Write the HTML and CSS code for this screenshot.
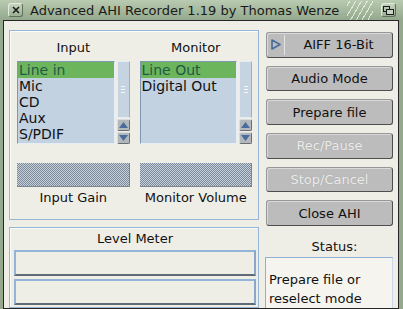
FILE: index.html
```html
<!DOCTYPE html>
<html lang="en">
<head>
    <meta charset="UTF-8">
    <title>Advanced AHI Recorder</title>
    <link rel="stylesheet" href="styles.css">
</head>
<body>
    <div class="window">
        <!-- Title bar -->
        <div class="titlebar">
            <span class="gadget close">
                <svg width="8" height="8" viewBox="0 0 8 8"><path d="M1 1L7 7M7 1L1 7" stroke="#1c1c1c" stroke-width="1.6"/></svg>
            </span>
            <span class="title">Advanced AHI Recorder 1.19 by Thomas Wenze</span>
            <span class="stripes"></span>
            <span class="gadget depth">
                <svg width="11" height="9" viewBox="0 0 11 9"><rect x="0.5" y="0.5" width="6" height="5" fill="none" stroke="#1c1c1c"/><rect x="3.5" y="3.5" width="7" height="5" fill="#c9d5c3" stroke="#1c1c1c"/></svg>
            </span>
        </div>

        <div class="content">
            <div class="left">
                <!-- Mixer group -->
                <div class="group mixer">
                    <div class="channel">
                        <div class="label">Input</div>
                        <div class="listview">
                            <ul class="list">
                                <li class="sel">Line in</li>
                                <li>Mic</li>
                                <li>CD</li>
                                <li>Aux</li>
                                <li>S/PDIF</li>
                            </ul>
                            <div class="scroller">
                                <div class="track"><span class="knob"></span></div>
                                <div class="arrow up"><svg width="9" height="6" viewBox="0 0 9 6"><path d="M4.5 0L9 6H0Z" fill="#4a6c9c"/></svg></div>
                                <div class="arrow down"><svg width="9" height="6" viewBox="0 0 9 6"><path d="M0 0H9L4.5 6Z" fill="#4a6c9c"/></svg></div>
                            </div>
                        </div>
                        <div class="slider">
                            <svg width="100%" height="100%"><defs><pattern id="dots1" width="2" height="2" patternUnits="userSpaceOnUse"><rect width="1" height="1" fill="#7b8a9b"/><rect x="1" y="1" width="1" height="1" fill="#7b8a9b"/></pattern></defs><rect width="100%" height="100%" fill="url(#dots1)" shape-rendering="crispEdges"/></svg>
                        </div>
                        <div class="label">Input Gain</div>
                    </div>
                    <div class="channel">
                        <div class="label">Monitor</div>
                        <div class="listview">
                            <ul class="list">
                                <li class="sel">Line Out</li>
                                <li>Digital Out</li>
                            </ul>
                            <div class="scroller">
                                <div class="track"><span class="knob"></span></div>
                                <div class="arrow up"><svg width="9" height="6" viewBox="0 0 9 6"><path d="M4.5 0L9 6H0Z" fill="#4a6c9c"/></svg></div>
                                <div class="arrow down"><svg width="9" height="6" viewBox="0 0 9 6"><path d="M0 0H9L4.5 6Z" fill="#4a6c9c"/></svg></div>
                            </div>
                        </div>
                        <div class="slider">
                            <svg width="100%" height="100%"><defs><pattern id="dots2" width="2" height="2" patternUnits="userSpaceOnUse"><rect width="1" height="1" fill="#7b8a9b"/><rect x="1" y="1" width="1" height="1" fill="#7b8a9b"/></pattern></defs><rect width="100%" height="100%" fill="url(#dots2)" shape-rendering="crispEdges"/></svg>
                        </div>
                        <div class="label">Monitor Volume</div>
                    </div>
                </div>

                <!-- Level meter group -->
                <div class="group meter">
                    <div class="label">Level Meter</div>
                    <div class="gauge"></div>
                    <div class="gauge"></div>
                </div>
            </div>

            <div class="right">
                <div class="button cycle">
                    <span class="cycle-icon">
                        <svg width="10" height="11" viewBox="0 0 10 11"><path d="M1 1L9 5.5L1 10Z" fill="none" stroke="#4a6c9c" stroke-width="1.6" stroke-linejoin="round"/></svg>
                    </span>
                    <span class="cycle-text">AIFF 16-Bit</span>
                </div>
                <div class="button">Audio Mode</div>
                <div class="button">Prepare file</div>
                <div class="button disabled">Rec/Pause</div>
                <div class="button disabled">Stop/Cancel</div>
                <div class="button">Close AHI</div>
                <div class="status-label">Status:</div>
                <div class="status">Prepare file or<br>reselect mode</div>
            </div>
        </div>
    </div>
</body>
</html>
```

FILE: styles.css
```css
body, html {
    margin: 0;
    padding: 0;
    font-family: "DejaVu Sans", "Liberation Sans", sans-serif;
    color: #111;
    background-color: #93a88c;
}

.window {
    width: 403px;
    height: 309px;
    overflow: hidden;
    display: flex;
    flex-direction: column;
    background: #93a88c;
}

/* Title bar */
.titlebar {
    height: 20px;
    display: flex;
    align-items: center;
    background: linear-gradient(#b9cbb1, #93a88c);
    flex-shrink: 0;
}

.gadget {
    flex-shrink: 0;
    width: 13px;
    height: 12px;
    border: 1px solid #e3ebdf;
    border-right-color: #5f705a;
    border-bottom-color: #5f705a;
    border-radius: 3px;
    background: linear-gradient(#c4d3bd, #9db195);
    display: flex;
    align-items: center;
    justify-content: center;
}

.close {
    margin-left: 8px;
}

.title {
    margin-left: 7px;
    font-size: 13px;
    color: #1a1a1a;
    white-space: nowrap;
    overflow: hidden;
}

.stripes {
    flex-shrink: 0;
    width: 26px;
    height: 19px;
    margin-left: 8px;
    background: repeating-linear-gradient(-60deg, transparent 0 4px, rgba(240, 246, 236, 0.8) 4px 5px);
}

.depth {
    margin-left: auto;
    margin-right: 7px;
}

/* Window content */
.content {
    flex: 1;
    margin: 0 4px 0 3px;
    border: 1px solid #262626;
    background: #efeee6;
    display: flex;
    gap: 7px;
    padding: 9px 5px 0 5px;
    overflow: hidden;
}

.left {
    width: 250px;
    display: flex;
    flex-direction: column;
    gap: 7px;
}

.right {
    width: 127px;
    padding-top: 2px;
    display: flex;
    flex-direction: column;
}

.group {
    box-sizing: border-box;
    border: 1px solid #97b5d6;
    box-shadow: inset 1px 1px 0 #fbfbf7;
}

.label {
    font-size: 13px;
    line-height: 16px;
    text-align: center;
}

/* Mixer */
.mixer {
    height: 190px;
    display: flex;
    gap: 10px;
    padding: 9px 6px 0 7px;
}

.channel {
    flex: 1;
    display: flex;
    flex-direction: column;
}

.listview {
    margin-top: 5px;
    height: 83px;
    display: flex;
    gap: 2px;
}

.list {
    flex: 1;
    margin: 0;
    padding: 0;
    list-style: none;
    background: #c3d2e1;
    border: 1px solid #7f97b1;
    border-right-color: #e6edf4;
    border-bottom-color: #e6edf4;
    font-size: 14px;
    line-height: 16px;
}

.list li {
    padding-left: 1px;
}

.list li.sel {
    background: #6cb55d;
    color: #1f5a45;
}

.scroller {
    width: 13px;
    display: flex;
    flex-direction: column;
    gap: 1px;
}

.track {
    flex: 1;
    background: #c6d4e2;
    border: 1px solid #e4ecf4;
    border-right-color: #9eb0c4;
    display: flex;
    align-items: center;
    justify-content: center;
}

.knob {
    width: 4px;
    height: 10px;
    background: radial-gradient(circle, #f2f6fa 0.6px, transparent 0.9px) 0 0 / 2px 3px;
}

.arrow {
    height: 10px;
    border-radius: 2px;
    background: #b3b8bd;
    border: 1px solid #d8dce0;
    border-right-color: #6a6e72;
    border-bottom-color: #6a6e72;
    display: flex;
    align-items: center;
    justify-content: center;
}

.slider {
    margin-top: 19px;
    height: 23px;
    background: #c8d0d9;
    border-right: 1px solid #7a8592;
    border-bottom: 1px solid #7a8592;
}

.slider svg {
    display: block;
}

.channel .slider + .label {
    margin-top: 3px;
}

/* Level meter */
.meter {
    flex: 1;
    padding: 3px 2px 0 4px;
    display: flex;
    flex-direction: column;
}

.gauge {
    height: 26px;
    box-sizing: border-box;
    border: 2px solid #94b3d8;
    border-bottom-color: #5e6a78;
    border-right-color: #8aa6c8;
    background: #efeee6;
}

.meter .label + .gauge {
    margin-top: 3px;
}

.gauge + .gauge {
    margin-top: 3px;
}

/* Buttons */
.button {
    box-sizing: border-box;
    height: 26px;
    margin-bottom: 8px;
    border: 1px solid #979797;
    border-right-color: #4e4e4e;
    border-bottom-color: #4e4e4e;
    border-radius: 3px;
    background: #bcbcbc;
    box-shadow: inset 1px 1px 0 #d9d9d9;
    font-size: 13px;
    display: flex;
    align-items: center;
    justify-content: center;
}

.button.disabled {
    color: #ececec;
    text-shadow: 0 0 1px #9d9d9d;
}

.cycle {
    justify-content: flex-start;
}

.cycle-icon {
    width: 17px;
    height: 20px;
    border-right: 1px solid #e4e4e4;
    display: flex;
    align-items: center;
    justify-content: center;
}

.cycle-text {
    flex: 1;
    text-align: center;
}

.status-label {
    margin-top: 5px;
    padding-left: 10px;
    font-size: 13px;
    line-height: 16px;
    text-align: center;
}

.status {
    margin-top: 2px;
    flex: 1;
    margin-left: -1px;
    padding: 12px 0 0 3px;
    background: #f5f4ee;
    border-left: 1px solid #8fb0d6;
    border-top: 1px solid #8fb0d6;
    border-right: 1px solid #c9d8ea;
    font-size: 13px;
    line-height: 19px;
}
```
